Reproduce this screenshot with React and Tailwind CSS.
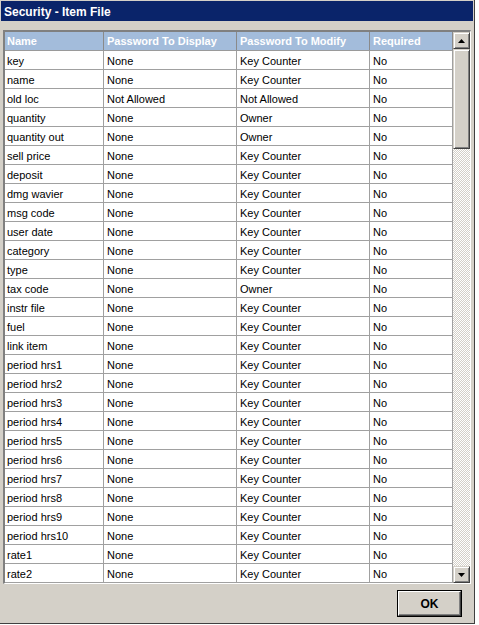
import React from "react";

const rows = [
  ["key", "None", "Key Counter", "No"],
  ["name", "None", "Key Counter", "No"],
  ["old loc", "Not Allowed", "Not Allowed", "No"],
  ["quantity", "None", "Owner", "No"],
  ["quantity out", "None", "Owner", "No"],
  ["sell price", "None", "Key Counter", "No"],
  ["deposit", "None", "Key Counter", "No"],
  ["dmg wavier", "None", "Key Counter", "No"],
  ["msg code", "None", "Key Counter", "No"],
  ["user date", "None", "Key Counter", "No"],
  ["category", "None", "Key Counter", "No"],
  ["type", "None", "Key Counter", "No"],
  ["tax code", "None", "Owner", "No"],
  ["instr file", "None", "Key Counter", "No"],
  ["fuel", "None", "Key Counter", "No"],
  ["link item", "None", "Key Counter", "No"],
  ["period hrs1", "None", "Key Counter", "No"],
  ["period hrs2", "None", "Key Counter", "No"],
  ["period hrs3", "None", "Key Counter", "No"],
  ["period hrs4", "None", "Key Counter", "No"],
  ["period hrs5", "None", "Key Counter", "No"],
  ["period hrs6", "None", "Key Counter", "No"],
  ["period hrs7", "None", "Key Counter", "No"],
  ["period hrs8", "None", "Key Counter", "No"],
  ["period hrs9", "None", "Key Counter", "No"],
  ["period hrs10", "None", "Key Counter", "No"],
  ["rate1", "None", "Key Counter", "No"],
  ["rate2", "None", "Key Counter", "No"],
];

const cols = ["w-[99px] pl-[2px]", "w-[133px] pl-[3px]", "w-[133px] pl-[3px]", "w-[83px] pl-[3px]"];

// classic raised 3d box used for scroll buttons and thumb
const raised =
  "bg-[#d4d0c8] border-t border-l border-r border-b border-t-[#d4d0c8] border-l-[#d4d0c8] border-r-[#404040] border-b-[#404040] shadow-[inset_1px_1px_#ffffff,inset_-1px_-1px_#808080]";

const Arrow = ({ down }) => (
  <svg width="7" height="4" viewBox="0 0 7 4">
    {down ? <polygon points="0,0 7,0 3.5,4" fill="#000" /> : <polygon points="3.5,0 7,4 0,4" fill="#000" />}
  </svg>
);

export default function App() {
  return (
    <div className="w-[479px] h-[625px] bg-white font-['Liberation_Sans',Arial,sans-serif] text-[11px] leading-none">
      <div className="w-[475px] h-[624px] bg-[#d4d0c8] border-r border-b border-[#404040] pl-px pt-px flex flex-col">
        <div className="h-[20px] w-[472px] bg-[#0a246a] text-white font-bold text-[12px] flex items-center pl-[3px] pt-[2px]">
          Security - Item File
        </div>

        <div className="mt-[9px] ml-[2px] w-[468px] border-t-2 border-l-2 border-t-[#808080] border-l-[#808080] border-r border-b border-r-[#ffffff] border-b-[#ffffff] flex bg-white">
          <div className="flex flex-col">
            <div className="flex h-[19px] bg-[#a3bcdb] text-white font-bold border-b border-[#9a9a9a]">
              {["Name", "Password To Display", "Password To Modify", "Required"].map((h, i) => (
                <div key={h} className={`${cols[i]} border-r border-[#8a8a8a] flex items-center pt-px`}>
                  {h}
                </div>
              ))}
            </div>
            {rows.map((r, ri) => (
              <div key={ri} className="flex h-[19px] border-b border-[#a0a0a0] text-black">
                {r.map((c, i) => (
                  <div key={i} className={`${cols[i]} border-r border-[#a0a0a0] flex items-center pt-[2px]`}>
                    {c}
                  </div>
                ))}
              </div>
            ))}
          </div>

          {/* vertical scrollbar */}
          <div className="w-[17px] flex flex-col bg-[repeating-conic-gradient(#ffffff_0%_25%,#d4d0c8_0%_50%)] bg-[length:2px_2px]">
            <div className={`${raised} h-[17px] flex items-center justify-center`}>
              <Arrow />
            </div>
            <div className={`${raised} h-[100px]`} />
            <div className="flex-1" />
            <div className={`${raised} h-[17px] flex items-center justify-center`}>
              <Arrow down />
            </div>
          </div>
        </div>

        <div className="flex justify-end pr-[12px] mt-[6px]">
          <div className="w-[65px] h-[27px] border border-black">
            <div className="w-full h-full border-t border-l border-r border-b border-t-[#ffffff] border-l-[#ffffff] border-r-[#404040] border-b-[#404040] shadow-[inset_-1px_-1px_#808080] flex items-center justify-center font-bold text-black text-[12px]">
              OK
            </div>
          </div>
        </div>
      </div>
    </div>
  );
}
